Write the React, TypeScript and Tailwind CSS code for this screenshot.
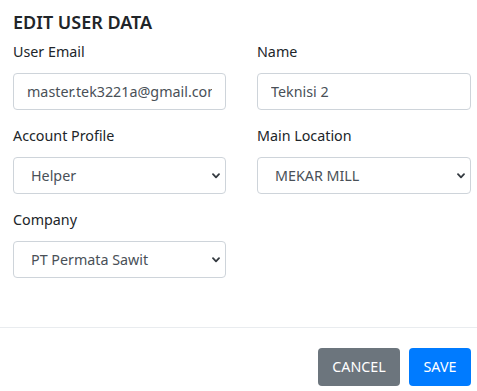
import React from "react";

const Chevron = () => (
  <svg className="pointer-events-none absolute right-[6px] top-1/2 -translate-y-1/2" width="8" height="6" viewBox="0 0 8 6">
    <path d="M1 1.2 L4 4.3 L7 1.2" fill="none" stroke="#343a40" strokeWidth="1.8" strokeLinecap="round" strokeLinejoin="round" />
  </svg>
);

function Field({ label, children }: { label: string; children: React.ReactNode }) {
  return (
    <div className="flex flex-col">
      <label className="text-[14.3px] leading-[22px] text-[#212529]">{label}</label>
      <div className="mt-[10px]">{children}</div>
    </div>
  );
}

function TextInput({ value }: { value: string }) {
  return (
    <input
      readOnly
      value={value}
      className="h-[37px] w-full rounded-[4px] border border-[#ced4da] bg-white px-[13px] text-[14.3px] text-[#495057] outline-none"
    />
  );
}

function Select({ value }: { value: string }) {
  return (
    <div className="relative">
      <div className="flex h-[37px] w-full items-center rounded-[4px] border border-[#ced4da] bg-white pl-[17px] text-[14.3px] text-[#495057]">
        {value}
      </div>
      <Chevron />
    </div>
  );
}

export default function App() {
  return (
    <div className="h-[391px] w-[477px] bg-white" style={{ fontFamily: '"Noto Sans", "Open Sans", sans-serif' }}>
      <div className="pl-[13px] pr-[6px] pt-[10px]">
        <h2 className="text-[18px] font-semibold leading-[24px] text-[#212529]">EDIT USER DATA</h2>
        <div className="mt-[7px] grid grid-cols-[213px_214px] gap-x-[31px] gap-y-[15px]">
          <Field label="User Email">
            <TextInput value="master.tek3221a@gmail.com" />
          </Field>
          <Field label="Name">
            <TextInput value="Teknisi 2" />
          </Field>
          <Field label="Account Profile">
            <Select value="Helper" />
          </Field>
          <Field label="Main Location">
            <Select value="MEKAR MILL" />
          </Field>
          <Field label="Company">
            <Select value="PT Permata Sawit" />
          </Field>
        </div>
      </div>
      <div className="mt-[49px] border-t border-[#e9ecef]" />
      <div className="flex justify-end gap-[9px] pr-[6px] pt-[20px]">
        <button className="h-[38px] w-[82px] rounded-[4px] bg-[#6c757d] text-[14.3px] text-white">CANCEL</button>
        <button className="h-[38px] w-[62px] rounded-[4px] bg-[#007bff] text-[14.3px] text-white">SAVE</button>
      </div>
    </div>
  );
}
